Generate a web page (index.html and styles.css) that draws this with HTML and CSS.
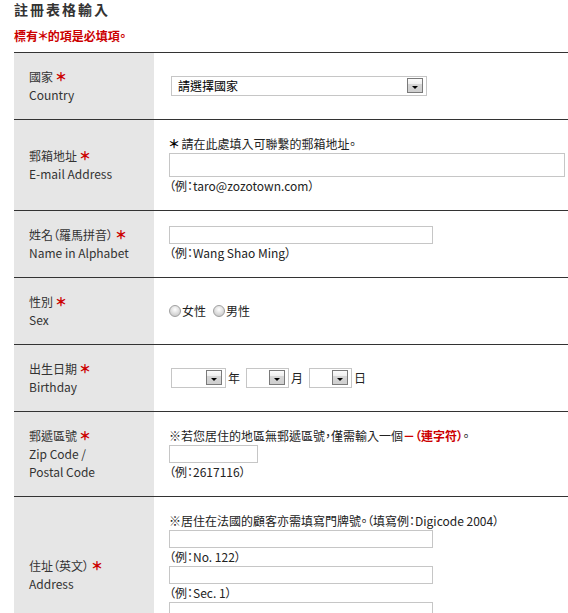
FILE: index.html
```html
<!DOCTYPE html>
<html lang="zh-Hant">
<head>
<meta charset="utf-8">
<title>註冊表格輸入</title>
<link rel="stylesheet" href="styles.css">
</head>
<body>
<div class="page">
  <h1 class="title">註冊表格輸入</h1>
  <p class="note">標有＊的項是必填項。</p>
  <div class="form">
    <div class="row">
      <div class="label"><div>國家<span class="req">＊</span></div><div>Country</div></div>
      <div class="field">
        <div class="select sel-country"><span class="select-text">請選擇國家</span><span class="arrow"></span></div>
      </div>
    </div>
    <div class="row">
      <div class="label"><div>郵箱地址<span class="req">＊</span></div><div>E-mail Address</div></div>
      <div class="field">
        <div class="line"><span class="star">＊</span> 請在此處填入可聯繫的郵箱地址。</div>
        <input class="input in-email" type="text">
        <div class="line">（例：taro@zozotown.com）</div>
      </div>
    </div>
    <div class="row">
      <div class="label"><div>姓名（羅馬拼音）<span class="req">＊</span></div><div>Name in Alphabet</div></div>
      <div class="field">
        <input class="input in-mid" type="text">
        <div class="line">（例：Wang Shao Ming）</div>
      </div>
    </div>
    <div class="row">
      <div class="label"><div>性別<span class="req">＊</span></div><div>Sex</div></div>
      <div class="field">
        <div class="radios">
          <label class="radio-label"><span class="radio"></span>女性</label>
          <label class="radio-label"><span class="radio"></span>男性</label>
        </div>
      </div>
    </div>
    <div class="row">
      <div class="label"><div>出生日期<span class="req">＊</span></div><div>Birthday</div></div>
      <div class="field">
        <div class="dates">
          <div class="select sel-year"><span class="arrow"></span></div><span class="unit">年</span>
          <div class="select sel-small"><span class="arrow"></span></div><span class="unit">月</span>
          <div class="select sel-small"><span class="arrow"></span></div><span class="unit">日</span>
        </div>
      </div>
    </div>
    <div class="row">
      <div class="label"><div>郵遞區號<span class="req">＊</span></div><div>Zip Code /</div><div>Postal Code</div></div>
      <div class="field">
        <div class="line">※若您居住的地區無郵遞區號，僅需輸入一個<span class="red">－（連字符）</span>。</div>
        <input class="input in-zip" type="text">
        <div class="line">（例：2617116）</div>
      </div>
    </div>
    <div class="row">
      <div class="label"><div>住址（英文）<span class="req">＊</span></div><div>Address</div></div>
      <div class="field">
        <div class="line">※居住在法國的顧客亦需填寫門牌號。（填寫例：Digicode 2004）</div>
        <input class="input in-mid" type="text">
        <div class="line">（例：No. 122）</div>
        <input class="input in-mid" type="text">
        <div class="line">（例：Sec. 1）</div>
        <input class="input in-mid in-last" type="text">
      </div>
    </div>
  </div>
</div>
</body>
</html>
```

FILE: styles.css
```css
html, body {
  margin: 0;
  padding: 0;
  background: #fff;
}

body {
  font-family: "Noto Sans CJK JP", "Noto Sans CJK TC", sans-serif;
  font-size: 12px;
  line-height: 18px;
  color: #333;
  font-feature-settings: "palt";
}

.page {
  padding-left: 14px;
}

.title {
  margin: 0;
  font-size: 14px;
  line-height: 18px;
  font-weight: bold;
  letter-spacing: 2px;
  color: #333;
}

.note {
  margin: 9px 0 7px;
  font-weight: bold;
  color: #c00;
}

.form {
  border-top: 1px solid #333;
}

.row {
  display: flex;
  border-bottom: 1px solid #333;
}

.label {
  width: 140px;
  flex-shrink: 0;
  box-sizing: border-box;
  padding: 15px;
  background: #e6e6e6;
  display: flex;
  flex-direction: column;
  justify-content: center;
}

.req {
  display: inline-block;
  margin-left: 3px;
  color: #c00;
  font-weight: 900;
  font-size: 12px;
}

.star {
  color: #000;
  font-weight: bold;
}

.field {
  flex: 1;
  padding: 15px;
  display: flex;
  flex-direction: column;
  justify-content: center;
  align-items: flex-start;
  color: #222;
}

.line {
  height: 18px;
  white-space: nowrap;
}

.red {
  color: #c00;
  font-weight: bold;
}

.input {
  display: block;
  box-sizing: border-box;
  margin: 0;
  padding: 0 2px;
  height: 18px;
  border: 1px solid #c6c6c6;
  background: #fff;
  font: inherit;
}

.in-email {
  width: 396px;
  height: 24px;
}

.in-mid {
  width: 264px;
}

.in-last {
  margin-bottom: 18px;
}

.in-zip {
  width: 89px;
}

.select {
  position: relative;
  box-sizing: border-box;
  height: 20px;
  margin-left: 2px;
  border: 1px solid #c6c6c6;
  background: #fff;
  color: #000;
  display: flex;
  align-items: center;
}

.sel-country {
  width: 256px;
}

.sel-year {
  width: 55px;
}

.sel-small {
  width: 43px;
}

.select-text {
  padding-left: 6px;
}

.arrow {
  position: absolute;
  top: 1px;
  right: 3px;
  box-sizing: border-box;
  width: 16px;
  height: 15px;
  border: 1px solid #7a7a7a;
  background: linear-gradient(#fbfbfb 0%, #f0f0f0 35%, #d6d6d6 40%, #cfcfcf 100%);
}

.arrow::after {
  content: "";
  position: absolute;
  left: 4px;
  top: 7px;
  border-left: 3px solid transparent;
  border-right: 3px solid transparent;
  border-top: 3px solid #000;
}

.radios {
  display: flex;
  align-items: center;
  gap: 7px;
}

.radio-label {
  display: flex;
  align-items: center;
}

.radio {
  display: inline-block;
  box-sizing: border-box;
  width: 12px;
  height: 12px;
  margin-right: 1px;
  border-radius: 50%;
  border: 1px solid #a0a0a0;
  background: radial-gradient(circle at 50% 35%, #ffffff 0%, #e2e2e2 45%, #bdbdbd 100%);
}

.dates {
  display: flex;
  align-items: center;
}

.unit {
  margin-left: 2px;
  margin-right: 4px;
}
```
